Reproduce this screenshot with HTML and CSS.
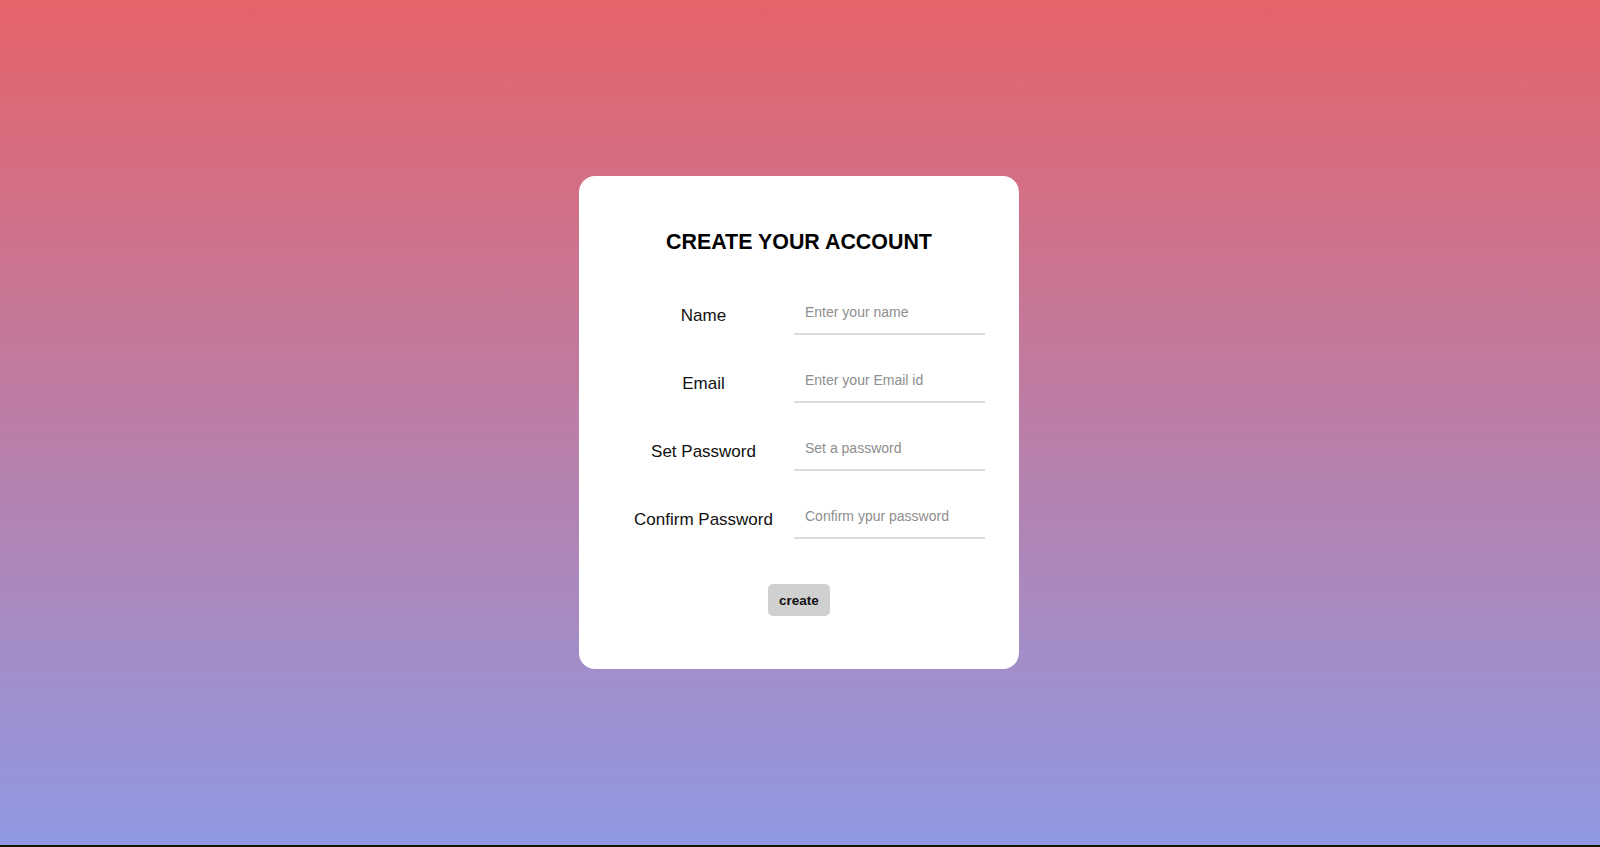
FILE: index.html
```html
<!DOCTYPE html>
<html lang="en">
<head>
  <meta charset="UTF-8">
  <meta name="viewport" content="width=device-width, initial-scale=1.0">
  <title>Create Your Account</title>
  <link rel="stylesheet" href="styles.css">
</head>
<body>
  <div class="card">
    <h1>CREATE YOUR ACCOUNT</h1>
    <form id="signupForm" class="signup">
      <div class="row">
        <label for="name">Name</label>
        <input type="text" id="name" placeholder="Enter your name">
      </div>
      <div class="row">
        <label for="email">Email</label>
        <input type="email" id="email" placeholder="Enter your Email id">
      </div>
      <div class="row">
        <label for="password">Set Password</label>
        <input type="password" id="password" placeholder="Set a password">
      </div>
      <div class="row">
        <label for="confirm">Confirm Password</label>
        <input type="password" id="confirm" placeholder="Confirm ypur password">
      </div>
      <button type="submit" class="btn">create</button>
    </form>
  </div>
</body>
</html>
```

FILE: styles.css
```css
/* Basic Reset */
* { margin: 0; padding: 0; box-sizing: border-box; }
html {
  background: #141400;
}
body {
  font-family: "Liberation Sans", Arial, sans-serif;
  height: calc(100vh - 2px);
  background: linear-gradient(to bottom, #e6636a, #9099e3);
  display: flex;
  justify-content: center;
  align-items: center;
}
.card {
  width: 440px;
  margin-right: 2px;
  background: #fff;
  border-radius: 16px;
  padding: 54px 34px 53px;
}
h1 {
  font-size: 21.4px;
  line-height: 24px;
  font-weight: bold;
  text-align: center;
  color: #000;
  margin-bottom: 37px;
}
.signup {
  display: flex;
  flex-direction: column;
  align-items: center;
}
.row {
  display: grid;
  grid-template-columns: 181px 191px;
  align-items: center;
  margin-bottom: 24px;
}
.row:last-of-type {
  margin-bottom: 45px;
}
label {
  text-align: center;
  font-size: 17px;
  color: #111;
  padding-top: 5px;
}
input {
  height: 44px;
  border: none;
  border-bottom: 2px solid #dcdcdc;
  padding: 0 11px;
  font-family: inherit;
  font-size: 14px;
  color: #333;
  outline: none;
  background: transparent;
}
input::placeholder {
  color: #8e8e8e;
}
.btn {
  height: 32px;
  padding: 0 11px;
  background: #d0d0d0;
  border: none;
  border-radius: 5px;
  font-family: inherit;
  font-size: 13.5px;
  font-weight: bold;
  color: #111;
  cursor: pointer;
}
```
